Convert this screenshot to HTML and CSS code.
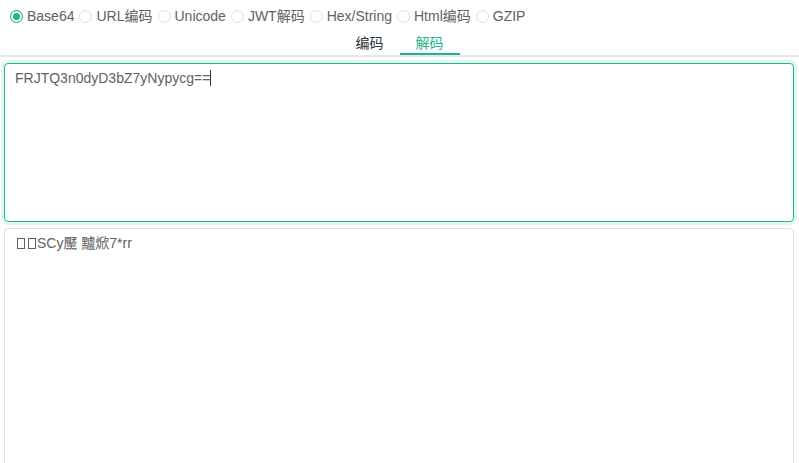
FILE: index.html
```html
<!DOCTYPE html>
<html lang="zh-CN">
<head>
    <meta charset="UTF-8">
    <meta name="viewport" content="width=device-width, initial-scale=1.0">
    <title>编码转换</title>
    <link rel="stylesheet" href="styles.css">
</head>
<body>
<div class="types">
    <label class="radio checked"><span class="dot"></span>Base64</label>
    <label class="radio"><span class="dot"></span>URL编码</label>
    <label class="radio"><span class="dot"></span>Unicode</label>
    <label class="radio"><span class="dot"></span>JWT解码</label>
    <label class="radio"><span class="dot"></span>Hex/String</label>
    <label class="radio"><span class="dot"></span>Html编码</label>
    <label class="radio"><span class="dot"></span>GZIP</label>
</div>
<div class="tabs">
    <div class="tab">编码</div>
    <div class="tab active">解码</div>
</div>
<div class="panels">
    <div class="box input focus">FRJTQ3n0dyD3bZ7yNypycg==<span class="caret"></span></div>
    <div class="box output"><span class="tofu"></span><span class="tofu"></span>SCy黶 黸焮7*rr</div>
</div>
</body>
</html>
```

FILE: styles.css
```css
body {
    margin: 0;
    font-family: 'Liberation Sans', 'Noto Sans CJK SC', sans-serif;
    font-size: 14px;
    color: #606266;
    background: #fff;
    overflow: hidden;
}

.types {
    display: flex;
    align-items: center;
    height: 32px;
    padding: 0 10px;
}

.radio {
    display: flex;
    align-items: center;
    margin-right: 5px;
    line-height: 16px;
    cursor: pointer;
}

.radio .dot {
    width: 11px;
    height: 11px;
    border: 1px solid #dcdfe6;
    border-radius: 50%;
    margin-right: 4px;
    background: #fff;
}

.radio.checked .dot {
    border-color: #1fb58f;
    background: #1fb58f;
    box-shadow: inset 0 0 0 2px #fff;
}

.tabs {
    display: flex;
    justify-content: center;
    border-bottom: 2px solid #e4e7ed;
}

.tab {
    height: 23px;
    line-height: 22px;
    padding: 0 16px;
    color: #303133;
    box-sizing: border-box;
}

.tab.active {
    color: #1fb58f;
    border-bottom: 2px solid #1fb58f;
}

.panels {
    padding: 6px 5px 0 4px;
    display: flex;
    flex-direction: column;
    gap: 6px;
}

.box {
    border: 1px solid #dcdfe6;
    border-radius: 4px;
    padding: 4px 10px;
    line-height: 20px;
    box-sizing: border-box;
}

.input {
    height: 159px;
}

.focus {
    border-color: #1fb58f;
    box-shadow: 0 0 0 3px #e3f6f0;
}

.caret {
    display: inline-block;
    width: 1px;
    height: 16px;
    background: #303133;
    vertical-align: -3px;
}

.tofu {
    display: inline-block;
    width: 8px;
    height: 11px;
    border: 1px solid #606266;
    box-sizing: border-box;
    margin: 0 1px 0 2px;
    vertical-align: -1px;
}

.output {
    height: 260px;
}
```
